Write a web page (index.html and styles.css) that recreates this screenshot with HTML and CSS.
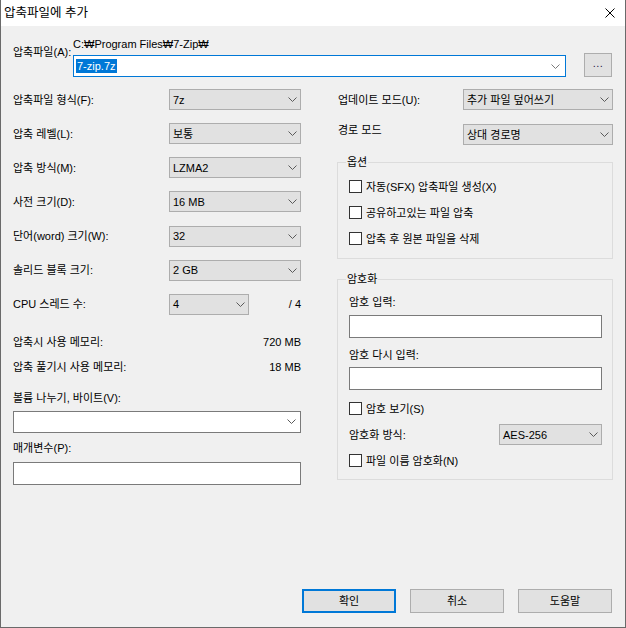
FILE: index.html
```html
<!DOCTYPE html>
<html lang="ko">
<head>
<meta charset="utf-8">
<title>압축파일에 추가</title>
<link rel="stylesheet" href="styles.css">
</head>
<body>
<div class="window">
  <div class="titlebar">
    <span class="title">압축파일에 추가</span>
    <svg class="close" width="10" height="10" viewBox="0 0 10 10"><path d="M0.5 0.5 L9.5 9.5 M9.5 0.5 L0.5 9.5" stroke="#000" stroke-width="1" fill="none"/></svg>
  </div>
  <div class="content">
    <div class="archive">
      <span class="archive-label">압축파일(A):</span>
      <div class="archive-main">
        <div class="path">C:₩Program Files₩7-Zip₩</div>
        <div class="combo focused">
          <span class="sel">7-zip.7z</span>
          <svg class="chev light" width="9" height="5" viewBox="0 0 9 5"><polyline points="0.5,0.5 4.5,4.5 8.5,0.5" fill="none" stroke="#7a7a7a" stroke-width="1"/></svg>
        </div>
      </div>
      <div class="btn browse">...</div>
    </div>

    <div class="columns">
      <div class="col-left">
        <div class="lrow"><span class="lbl">압축파일 형식(F):</span><div class="select"><span>7z</span><svg class="chev" width="9" height="5" viewBox="0 0 9 5"><polyline points="0.5,0.5 4.5,4.5 8.5,0.5" fill="none" stroke="#5a5a5a" stroke-width="1"/></svg></div></div>
        <div class="lrow"><span class="lbl">압축 레벨(L):</span><div class="select"><span>보통</span><svg class="chev" width="9" height="5" viewBox="0 0 9 5"><polyline points="0.5,0.5 4.5,4.5 8.5,0.5" fill="none" stroke="#5a5a5a" stroke-width="1"/></svg></div></div>
        <div class="lrow"><span class="lbl">압축 방식(M):</span><div class="select"><span>LZMA2</span><svg class="chev" width="9" height="5" viewBox="0 0 9 5"><polyline points="0.5,0.5 4.5,4.5 8.5,0.5" fill="none" stroke="#5a5a5a" stroke-width="1"/></svg></div></div>
        <div class="lrow"><span class="lbl">사전 크기(D):</span><div class="select"><span>16 MB</span><svg class="chev" width="9" height="5" viewBox="0 0 9 5"><polyline points="0.5,0.5 4.5,4.5 8.5,0.5" fill="none" stroke="#5a5a5a" stroke-width="1"/></svg></div></div>
        <div class="lrow"><span class="lbl">단어(word) 크기(W):</span><div class="select"><span>32</span><svg class="chev" width="9" height="5" viewBox="0 0 9 5"><polyline points="0.5,0.5 4.5,4.5 8.5,0.5" fill="none" stroke="#5a5a5a" stroke-width="1"/></svg></div></div>
        <div class="lrow"><span class="lbl">솔리드 블록 크기:</span><div class="select"><span>2 GB</span><svg class="chev" width="9" height="5" viewBox="0 0 9 5"><polyline points="0.5,0.5 4.5,4.5 8.5,0.5" fill="none" stroke="#5a5a5a" stroke-width="1"/></svg></div></div>
        <div class="lrow"><span class="lbl">CPU 스레드 수:</span><div class="select small"><span>4</span><svg class="chev" width="9" height="5" viewBox="0 0 9 5"><polyline points="0.5,0.5 4.5,4.5 8.5,0.5" fill="none" stroke="#5a5a5a" stroke-width="1"/></svg></div><span class="threads">/ 4</span></div>

        <div class="mem first"><span>압축시 사용 메모리:</span><span>720 MB</span></div>
        <div class="mem second"><span>압축 풀기시 사용 메모리:</span><span>18 MB</span></div>

        <div class="vol-label">볼륨 나누기, 바이트(V):</div>
        <div class="combo plain"><span></span><svg class="chev" width="9" height="5" viewBox="0 0 9 5"><polyline points="0.5,0.5 4.5,4.5 8.5,0.5" fill="none" stroke="#5a5a5a" stroke-width="1"/></svg></div>
        <div class="param-label">매개변수(P):</div>
        <div class="edit param"></div>
      </div>

      <div class="col-right">
        <div class="rrow"><span class="lbl">업데이트 모드(U):</span><div class="select wide"><span>추가 파일 덮어쓰기</span><svg class="chev" width="9" height="5" viewBox="0 0 9 5"><polyline points="0.5,0.5 4.5,4.5 8.5,0.5" fill="none" stroke="#5a5a5a" stroke-width="1"/></svg></div></div>
        <div class="rrow second"><span class="lbl up">경로 모드</span><div class="select wide"><span>상대 경로명</span><svg class="chev" width="9" height="5" viewBox="0 0 9 5"><polyline points="0.5,0.5 4.5,4.5 8.5,0.5" fill="none" stroke="#5a5a5a" stroke-width="1"/></svg></div></div>

        <div class="group options">
          <span class="legend">옵션</span>
          <div class="chk"><span class="box"></span><span>자동(SFX) 압축파일 생성(X)</span></div>
          <div class="chk"><span class="box"></span><span>공유하고있는 파일 압축</span></div>
          <div class="chk"><span class="box"></span><span>압축 후 원본 파일을 삭제</span></div>
        </div>

        <div class="group crypt">
          <span class="legend">암호화</span>
          <div class="clabel">암호 입력:</div>
          <div class="edit pw pw1"></div>
          <div class="clabel second">암호 다시 입력:</div>
          <div class="edit pw pw2"></div>
          <div class="chk show"><span class="box"></span><span>암호 보기(S)</span></div>
          <div class="crow"><span class="lbl">암호화 방식:</span><div class="select enc"><span>AES-256</span><svg class="chev" width="9" height="5" viewBox="0 0 9 5"><polyline points="0.5,0.5 4.5,4.5 8.5,0.5" fill="none" stroke="#5a5a5a" stroke-width="1"/></svg></div></div>
          <div class="chk names"><span class="box"></span><span>파일 이름 암호화(N)</span></div>
        </div>
      </div>
    </div>

    <div class="buttons">
      <div class="btn action default">확인</div>
      <div class="btn action">취소</div>
      <div class="btn action">도움말</div>
    </div>
  </div>
</div>
</body>
</html>
```

FILE: styles.css
```css
html, body {
  margin: 0;
  padding: 0;
  background: #f0f0f0;
}

.window {
  width: 626px;
  height: 628px;
  box-sizing: border-box;
  border-left: 1px solid #6a6a6a;
  border-right: 1px solid #6a6a6a;
  border-bottom: 1px solid #6a6a6a;
  background: #f0f0f0;
  display: flex;
  flex-direction: column;
  font-family: "Liberation Sans", "Noto Sans CJK KR", sans-serif;
  font-size: 11px;
  line-height: 14px;
  color: #000;
}

.titlebar {
  height: 26px;
  flex: none;
  background: #fff;
  display: flex;
  align-items: center;
  justify-content: space-between;
  padding: 0 10px 0 3px;
}

.title {
  font-size: 12.5px;
  line-height: 16px;
}

.close {
  display: block;
  margin-top: -1px;
}

.content {
  flex: 1;
  display: flex;
  flex-direction: column;
  padding: 11px 12px 14px 12px;
}

.archive {
  display: flex;
  align-items: flex-start;
  height: 40px;
}

.archive-label {
  width: 60px;
  margin-top: 8px;
}

.archive-main {
  width: 493px;
  display: flex;
  flex-direction: column;
  gap: 4px;
}

.combo {
  box-sizing: border-box;
  height: 22px;
  background: #fff;
  display: flex;
  align-items: center;
  justify-content: space-between;
}

.combo.focused {
  border: 1px solid #0078d7;
  padding: 0 5px 0 2px;
}

.combo.plain {
  width: 288px;
  border: 1px solid #7a7a7a;
  padding: 0 4px 0 3px;
  margin-top: 6px;
}

.sel {
  background: #0078d7;
  color: #fff;
  padding: 0 1px;
}

.chev {
  display: block;
  flex: none;
}

.btn {
  box-sizing: border-box;
  background: #e1e1e1;
  border: 1px solid #adadad;
  display: flex;
  align-items: center;
  justify-content: center;
}

.browse {
  margin-left: auto;
  margin-right: 1px;
  margin-top: 16px;
  width: 28px;
  height: 24px;
  align-items: flex-end;
  padding-bottom: 6px;
  color: #2a1a4a;
  letter-spacing: 0.5px;
}

.columns {
  display: flex;
  gap: 36px;
  margin-top: 12px;
}

.col-left {
  width: 288px;
  display: flex;
  flex-direction: column;
}

.col-right {
  width: 276px;
  display: flex;
  flex-direction: column;
}

.lrow {
  display: flex;
  align-items: center;
  height: 21px;
}

.lrow + .lrow {
  margin-top: 13.17px;
}

.lrow .lbl {
  width: 156px;
  flex: none;
}

.select {
  box-sizing: border-box;
  height: 21px;
  width: 132px;
  flex: none;
  background: #e1e1e1;
  border: 1px solid #adadad;
  display: flex;
  align-items: center;
  justify-content: space-between;
  padding: 0 3px 0 3px;
}

.select.small {
  width: 80px;
}

.select.wide {
  width: 150px;
}

.select.enc {
  width: 103px;
}

.threads {
  flex: 1;
  text-align: right;
}

.mem {
  display: flex;
  justify-content: space-between;
  height: 14px;
}

.mem.first {
  margin-top: 20px;
}

.mem.second {
  margin-top: 11px;
}

.vol-label {
  margin-top: 17px;
}

.param-label {
  margin-top: 8px;
}

.edit {
  box-sizing: border-box;
  background: #fff;
  border: 1px solid #7a7a7a;
  height: 23px;
}

.edit.param {
  width: 288px;
  margin-top: 7px;
}

.rrow {
  display: flex;
  align-items: center;
  height: 21px;
}

.rrow.second {
  margin-top: 14px;
}

.rrow .lbl {
  width: 125px;
  padding-left: 1px;
  flex: none;
}

.rrow .lbl.up {
  align-self: flex-start;
  margin-top: -1px;
}

.group {
  position: relative;
  box-sizing: border-box;
  border: 1px solid #dcdcdc;
  padding-left: 11px;
  display: flex;
  flex-direction: column;
}

.legend {
  position: absolute;
  top: -8px;
  left: 8px;
  padding: 0 1px;
  background: #f0f0f0;
}

.group.options {
  margin-top: 17px;
  height: 97px;
  padding-top: 17px;
}

.chk {
  display: flex;
  align-items: center;
  height: 13px;
  gap: 4px;
}

.options .chk + .chk {
  margin-top: 13px;
}

.box {
  box-sizing: border-box;
  width: 13px;
  height: 13px;
  border: 1px solid #333;
  background: #fff;
  flex: none;
}

.group.crypt {
  margin-top: 20px;
  height: 201px;
  padding-top: 15px;
}

.edit.pw {
  width: 253px;
}

.pw1 {
  margin-top: 6px;
}

.clabel.second {
  margin-top: 10px;
}

.pw2 {
  margin-top: 5px;
}

.chk.show {
  margin-top: 12px;
}

.crow {
  display: flex;
  align-items: center;
  height: 21px;
  margin-top: 9px;
}

.crow .lbl {
  width: 150px;
  flex: none;
}

.chk.names {
  margin-top: 9px;
}

.buttons {
  margin-top: auto;
  display: flex;
  justify-content: flex-end;
  gap: 14px;
  margin-right: 1px;
}

.btn.action {
  width: 94px;
  height: 24px;
}

.btn.default {
  border: 2px solid #0078d7;
}
```
